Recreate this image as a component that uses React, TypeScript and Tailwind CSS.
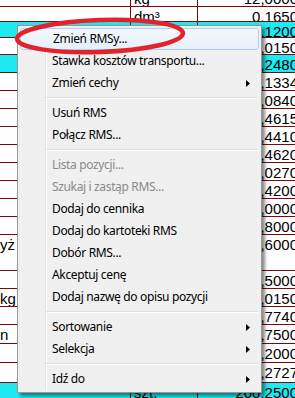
import React from 'react';

type Row = { h: number; a?: string; b?: string; c: string; cyan?: boolean };

const rows: Row[] = [
  { h: 18, b: 'kg', c: '12,0000' },
  { h: 15, b: 'dm³', c: '0,1650' },
  { h: 16, c: '0,1200', cyan: true },
  { h: 17, c: '0,0150' },
  { h: 18, c: '0,2480', cyan: true },
  { h: 18, c: '0,1334' },
  { h: 18, c: '0,0840' },
  { h: 18, c: '0,4615' },
  { h: 18, c: '0,4410' },
  { h: 18, c: '0,4620' },
  { h: 18, c: '0,0270' },
  { h: 18, c: '0,4200' },
  { h: 18, c: '1,0000' },
  { h: 18, c: '0,8000' },
  { h: 36, a: 'yż', c: '0,6000' },
  { h: 18, c: '0,5000' },
  { h: 18, a: 'kg', c: '0,0150' },
  { h: 18, c: '0,7740' },
  { h: 19, a: 'n', c: '0,7500' },
  { h: 19, c: '1,2000' },
  { h: 20, c: '0,2727' },
  { h: 20, b: 'szt.', c: '200,2500', cyan: true },
];

type Item = { label: string; disabled?: boolean; sub?: boolean; hot?: boolean } | 'sep';

const items: Item[] = [
  { label: 'Zmień RMSy...', hot: true },
  { label: 'Stawka kosztów transportu...' },
  { label: 'Zmień cechy', sub: true },
  'sep',
  { label: 'Usuń RMS' },
  { label: 'Połącz RMS...' },
  'sep',
  { label: 'Lista pozycji...', disabled: true },
  { label: 'Szukaj i zastąp RMS...', disabled: true },
  { label: 'Dodaj do cennika' },
  { label: 'Dodaj do kartoteki RMS' },
  { label: 'Dobór RMS...' },
  { label: 'Akceptuj cenę' },
  { label: 'Dodaj nazwę do opisu pozycji' },
  'sep',
  { label: 'Sortowanie', sub: true },
  { label: 'Selekcja', sub: true },
  'sep',
  { label: 'Idź do', sub: true },
];

const Arrow = () => (
  <svg width="4" height="7" viewBox="0 0 4 7" className="absolute right-[9px] top-[8px]">
    <path d="M0 0 L4 3.5 L0 7 Z" fill="#000" />
  </svg>
);

const ContextMenu = () => (
  <div className="absolute left-[17px] top-[25px] w-[245px] border border-[#979797] bg-[#f0f0f0] p-[2px] shadow-[3px_3px_3px_rgba(0,0,0,0.45)]">
    {/* gutter line */}
    <div className="absolute left-[27px] top-[2px] bottom-[2px] w-[2px] border-l border-[#e2e3e3] border-r border-r-white" />
    {items.map((it, i) =>
      it === 'sep' ? (
        <div key={i} className="relative flex h-[8px] flex-col justify-center pl-[26px] pr-[1px]">
          <div className="h-px bg-[#e0e0e0]" />
          <div className="h-px bg-white" />
        </div>
      ) : (
        <div
          key={i}
          className={
            'relative flex h-[22px] items-center pl-[32px] ' +
            (it.hot ? 'rounded-[3px] border border-[#aecff7] bg-gradient-to-b from-[#f4f8fe] to-[#e6effb] pl-[31px]' : '')
          }
        >
          <span className={it.disabled ? 'text-[#8a8a8a]' : 'text-black'}>{it.label}</span>
          {it.sub && <Arrow />}
        </div>
      )
    )}
  </div>
);

export default function App() {
  return (
    <div className="relative h-[398px] w-[295px] overflow-hidden bg-white">
      {/* sheet in the background */}
      <div className="mt-[-11px] w-[298px] font-['Liberation_Sans',Arial,sans-serif] text-[15px] leading-[17px] text-black">
        {rows.map((r, i) => (
          <div
            key={i}
            style={{ height: r.h }}
            className={'flex border-b border-[#7a0a0a] ' + (r.cyan ? 'bg-[#1ee8f0]' : 'bg-white')}
          >
            <div className="w-[131px] shrink-0 overflow-hidden whitespace-nowrap border-r border-[#7a0a0a] pt-px">{r.a}</div>
            <div className="w-[67px] shrink-0 overflow-hidden whitespace-nowrap border-r border-[#7a0a0a] pl-[3px] pt-px">{r.b}</div>
            <div className="flex-1 overflow-hidden whitespace-nowrap pt-px text-right">{r.c}</div>
          </div>
        ))}
      </div>

      <div className="font-['Noto_Sans',sans-serif] text-[12px] leading-none tracking-[-0.35px]">
        <ContextMenu />
      </div>

      {/* red marker ring */}
      <svg className="pointer-events-none absolute left-0 top-0" width="295" height="398">
        <ellipse cx="100" cy="36" rx="83" ry="16" fill="none" stroke="#e1232b" strokeWidth="4.5" transform="rotate(-2 100 36)" />
      </svg>
    </div>
  );
}
